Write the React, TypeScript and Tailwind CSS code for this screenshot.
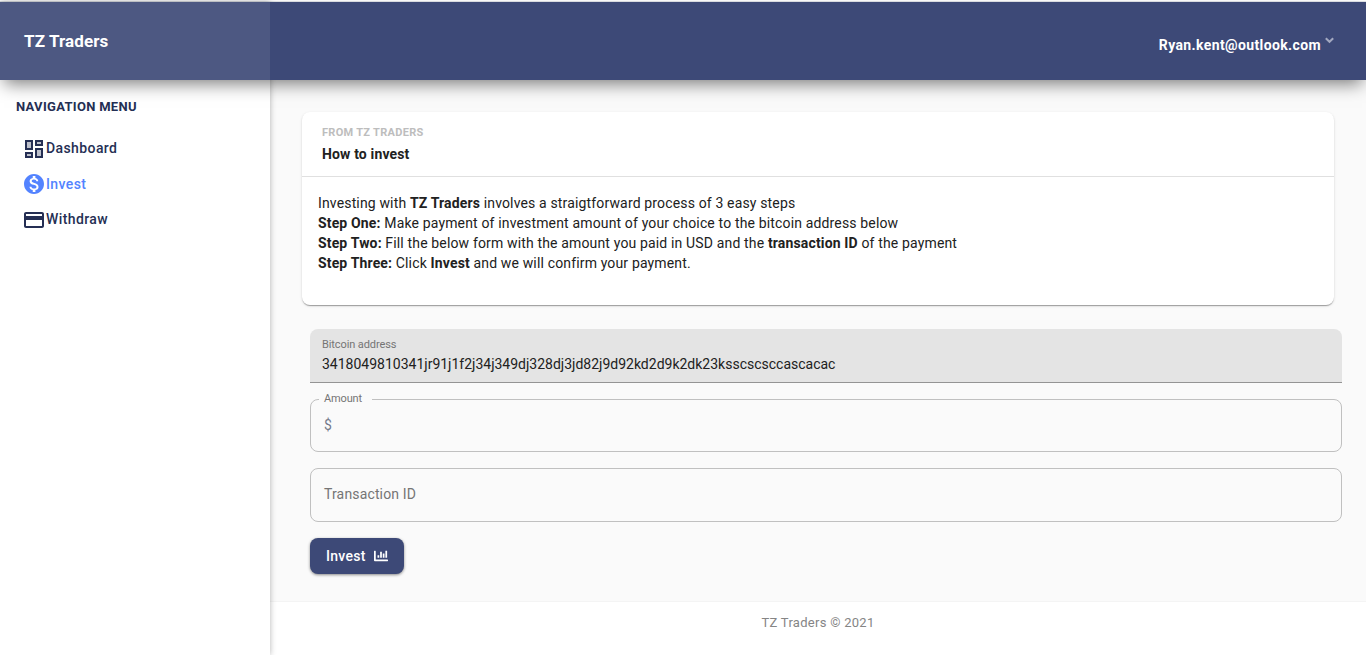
import React from "react";
import { FaChartBar } from "react-icons/fa";
import { MdCreditCard, MdMonetizationOn } from "react-icons/md";

function DashboardIcon() {
  return (
    <svg viewBox="0 0 24 24" className="size-6 shrink-0" fill="currentColor">
      <path opacity=".3" d="M5 5h4v6H5zm10 8h4v6h-4zM5 17h4v2H5zM15 5h4v2h-4z" />
      <path d="M3 13h8V3H3v10zm2-8h4v6H5V5zm8 16h8V11h-8v10zm2-8h4v6h-4v-6zM13 3v6h8V3h-8zm6 4h-4V5h4v2zM3 21h8v-6H3v6zm2-4h4v2H5v-2z" />
    </svg>
  );
}

function Sidebar() {
  return (
    <aside className="relative z-10 flex w-[270px] shrink-0 flex-col bg-white shadow-[0_0_6px_rgba(0,0,0,0.3)]">
      <div className="h-[78px]" />
      <nav className="flex flex-1 flex-col pt-[17px] text-sm font-medium tracking-[0.4px] text-[#252f54]">
        <h2 className="pl-4 text-[13px] leading-5 font-bold tracking-[0.3px]">NAVIGATION MENU</h2>
        <a className="mt-5 flex h-6 items-center pl-[22px]"><DashboardIcon /><span className="pb-0.5">Dashboard</span></a>
        <a className="mt-[11px] flex h-6 items-center pl-[22px] text-[#5383ff]"><MdMonetizationOn size={24} />Invest</a>
        <a className="mt-3 flex h-6 items-center pl-[22px]"><MdCreditCard size={24} /><span className="pb-0.5">Withdraw</span></a>
      </nav>
    </aside>
  );
}

export default function App() {
  return (
    <div className="h-[655px] overflow-hidden bg-white pt-px font-[Roboto,sans-serif] text-sm text-[#212121]">
      <div className="h-px bg-[#e0e3e7]" />
      <div className="relative flex h-[653px]">
        <header className="absolute inset-x-0 top-0 z-20 flex h-[78px] bg-[#3d4977] text-white shadow-[0_8px_16px_-4px_rgba(0,0,0,0.5)]">
          <div className="flex w-[270px] items-center bg-[#4d5882] pl-6 text-[17px] font-bold tracking-[0.1px]">TZ Traders</div>
          <div className="flex flex-1 items-start justify-end pt-[33px] pr-8">
            <span className="leading-5 font-bold tracking-[0.38px]">Ryan.kent@outlook.com</span>
            <svg viewBox="0 0 9 7" className="mt-0.5 ml-1 h-[7px] w-[9px]" fill="none" stroke="#a3a8c0" strokeWidth="2"><path d="M.8 1.2 4.5 4.8 8.2 1.2" /></svg>
          </div>
        </header>
        <Sidebar />
        <div className="flex flex-1 flex-col bg-[#fafafa] pt-[78px]">
          <main className="h-[521px] pt-8 pl-8">
            <section className="h-[193px] w-[1032px] rounded-lg bg-white shadow-[0_2px_1px_-1px_rgba(0,0,0,0.2),0_1px_1px_rgba(0,0,0,0.14),0_1px_3px_rgba(0,0,0,0.12)]">
              <div className="h-[65px] border-b border-[#e0e0e0] pt-[11px] pl-5">
                <p className="text-[11px] leading-5 font-bold tracking-[0.3px] text-[#bdbdbd]">FROM TZ TRADERS</p>
                <h1 className="mt-px leading-5 font-bold tracking-[0.15px]">How to invest</h1>
              </div>
              <div className="pt-4 pl-4 leading-5 tracking-[0.152px]">
                <p>Investing with <b>TZ Traders</b> involves a straigtforward process of 3 easy steps</p>
                <p><b>Step One:</b> Make payment of investment amount of your choice to the bitcoin address below</p>
                <p><b>Step Two:</b> Fill the below form with the amount you paid in USD and the <b>transaction ID</b> of the payment</p>
                <p><b>Step Three:</b> Click <b>Invest</b> and we will confirm your payment.</p>
              </div>
            </section>
            <form className="mt-6 ml-2 w-[1032px]">
              <div className="h-[54px] rounded-t-lg border-b border-[#949494] bg-[#e4e4e4] pt-2 pl-3">
                <label className="block text-[11px] leading-4 tracking-[-0.1px] text-[#757575]">Bitcoin address</label>
                <div className="mt-px leading-5">3418049810341jr91j1f2j34j349dj328dj3jd82j9d92kd2d9k2dk23ksscscsccascacac</div>
              </div>
              <div className="relative mt-4 h-[53px] rounded-lg border border-[#c0c0c0] pt-[15px] pl-[13px] leading-5 text-[#757a8a]">
                <label className="absolute -top-2 left-2 w-[53px] bg-[#fafafa] pl-[5px] text-[11px] leading-[14px] tracking-[-0.15px] text-[#757575]">Amount</label>$
              </div>
              <div className="mt-4 h-[54px] rounded-lg border border-[#c0c0c0] pt-[15px] pl-[13px] leading-5 tracking-[0.15px] text-[#757575]">Transaction ID</div>
              <button type="button" className="mt-4 flex h-9 w-[94px] items-center rounded-lg bg-[#3d4977] pl-4 font-medium tracking-[0.3px] text-white shadow-[0_1px_3px_rgba(0,0,0,0.45)]">
                Invest<FaChartBar size={14} className="ml-2" />
              </button>
            </form>
          </main>
          <footer className="flex-1 border-t border-[#f4f4f4] bg-white pt-[11px] text-center text-[13px] leading-5 tracking-[0.28px] text-[#858585]">TZ Traders © 2021</footer>
        </div>
      </div>
    </div>
  );
}
